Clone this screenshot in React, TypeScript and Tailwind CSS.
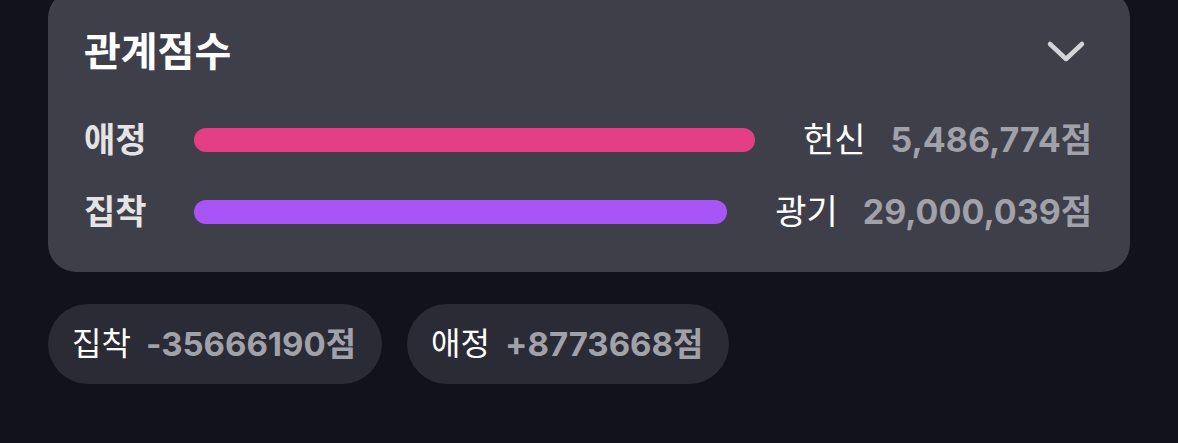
import React from 'react'

const font = { fontFamily: '"Inter", "Noto Sans CJK KR", sans-serif' }

interface ScoreRowProps {
  label: string;
  color: string;
  tag: string;
  value: string;
}

const ScoreRow = ({ label, color, tag, value }: ScoreRowProps) => {
  return (
    <div className="flex items-center h-[72px] leading-none">
      <span className="w-[110px] shrink-0 text-[34px] font-bold text-[#e4e4e7]">{label}</span>
      <div className={`h-6 flex-1 rounded-full ${color}`} />
      <span className="ml-12 text-[34px] text-white">{tag}</span>
      <span className="ml-[25px] text-[34px] font-bold text-[#a1a1aa]">{value}</span>
    </div>
  )
}

const Pill = ({ label, value }: { label: string; value: string }) => (
  <div className="h-20 pl-6 pr-[26px] rounded-full bg-[#2b2b36] flex items-center gap-[15px] leading-none">
    <span className="text-[32px] text-white">{label}</span>
    <span className="text-[33px] font-bold text-[#a1a1aa]">{value}</span>
  </div>
)

export default function App() {
  return (
    <div className="w-[1178px] h-[443px] overflow-hidden bg-[#12121c] px-12" style={font}>
      <div className="-mt-[10px] rounded-[28px] bg-[#3f3f4a] pl-9 pr-[38px] pt-[32px] pb-[24px]">
        <div className="flex items-center justify-between h-[60px]">
          <h2 className="text-[40px] font-bold text-white leading-none">관계점수</h2>
          <svg width="40" height="24" viewBox="0 0 40 24" className="mr-[6px]">
            <path d="M4 4 L20 19 L36 4" fill="none" stroke="#d4d4d8" strokeWidth="4.5" strokeLinecap="round" strokeLinejoin="round" />
          </svg>
        </div>
        <div className="mt-[22px]">
          <ScoreRow label="애정" color="bg-[#e43f85]" tag="헌신" value="5,486,774점" />
          <ScoreRow label="집착" color="bg-[#a855f7]" tag="광기" value="29,000,039점" />
        </div>
      </div>
      <div className="mt-8 flex gap-[25px]">
        <Pill label="집착" value="-35666190점" />
        <Pill label="애정" value="+8773668점" />
      </div>
    </div>
  )
}
